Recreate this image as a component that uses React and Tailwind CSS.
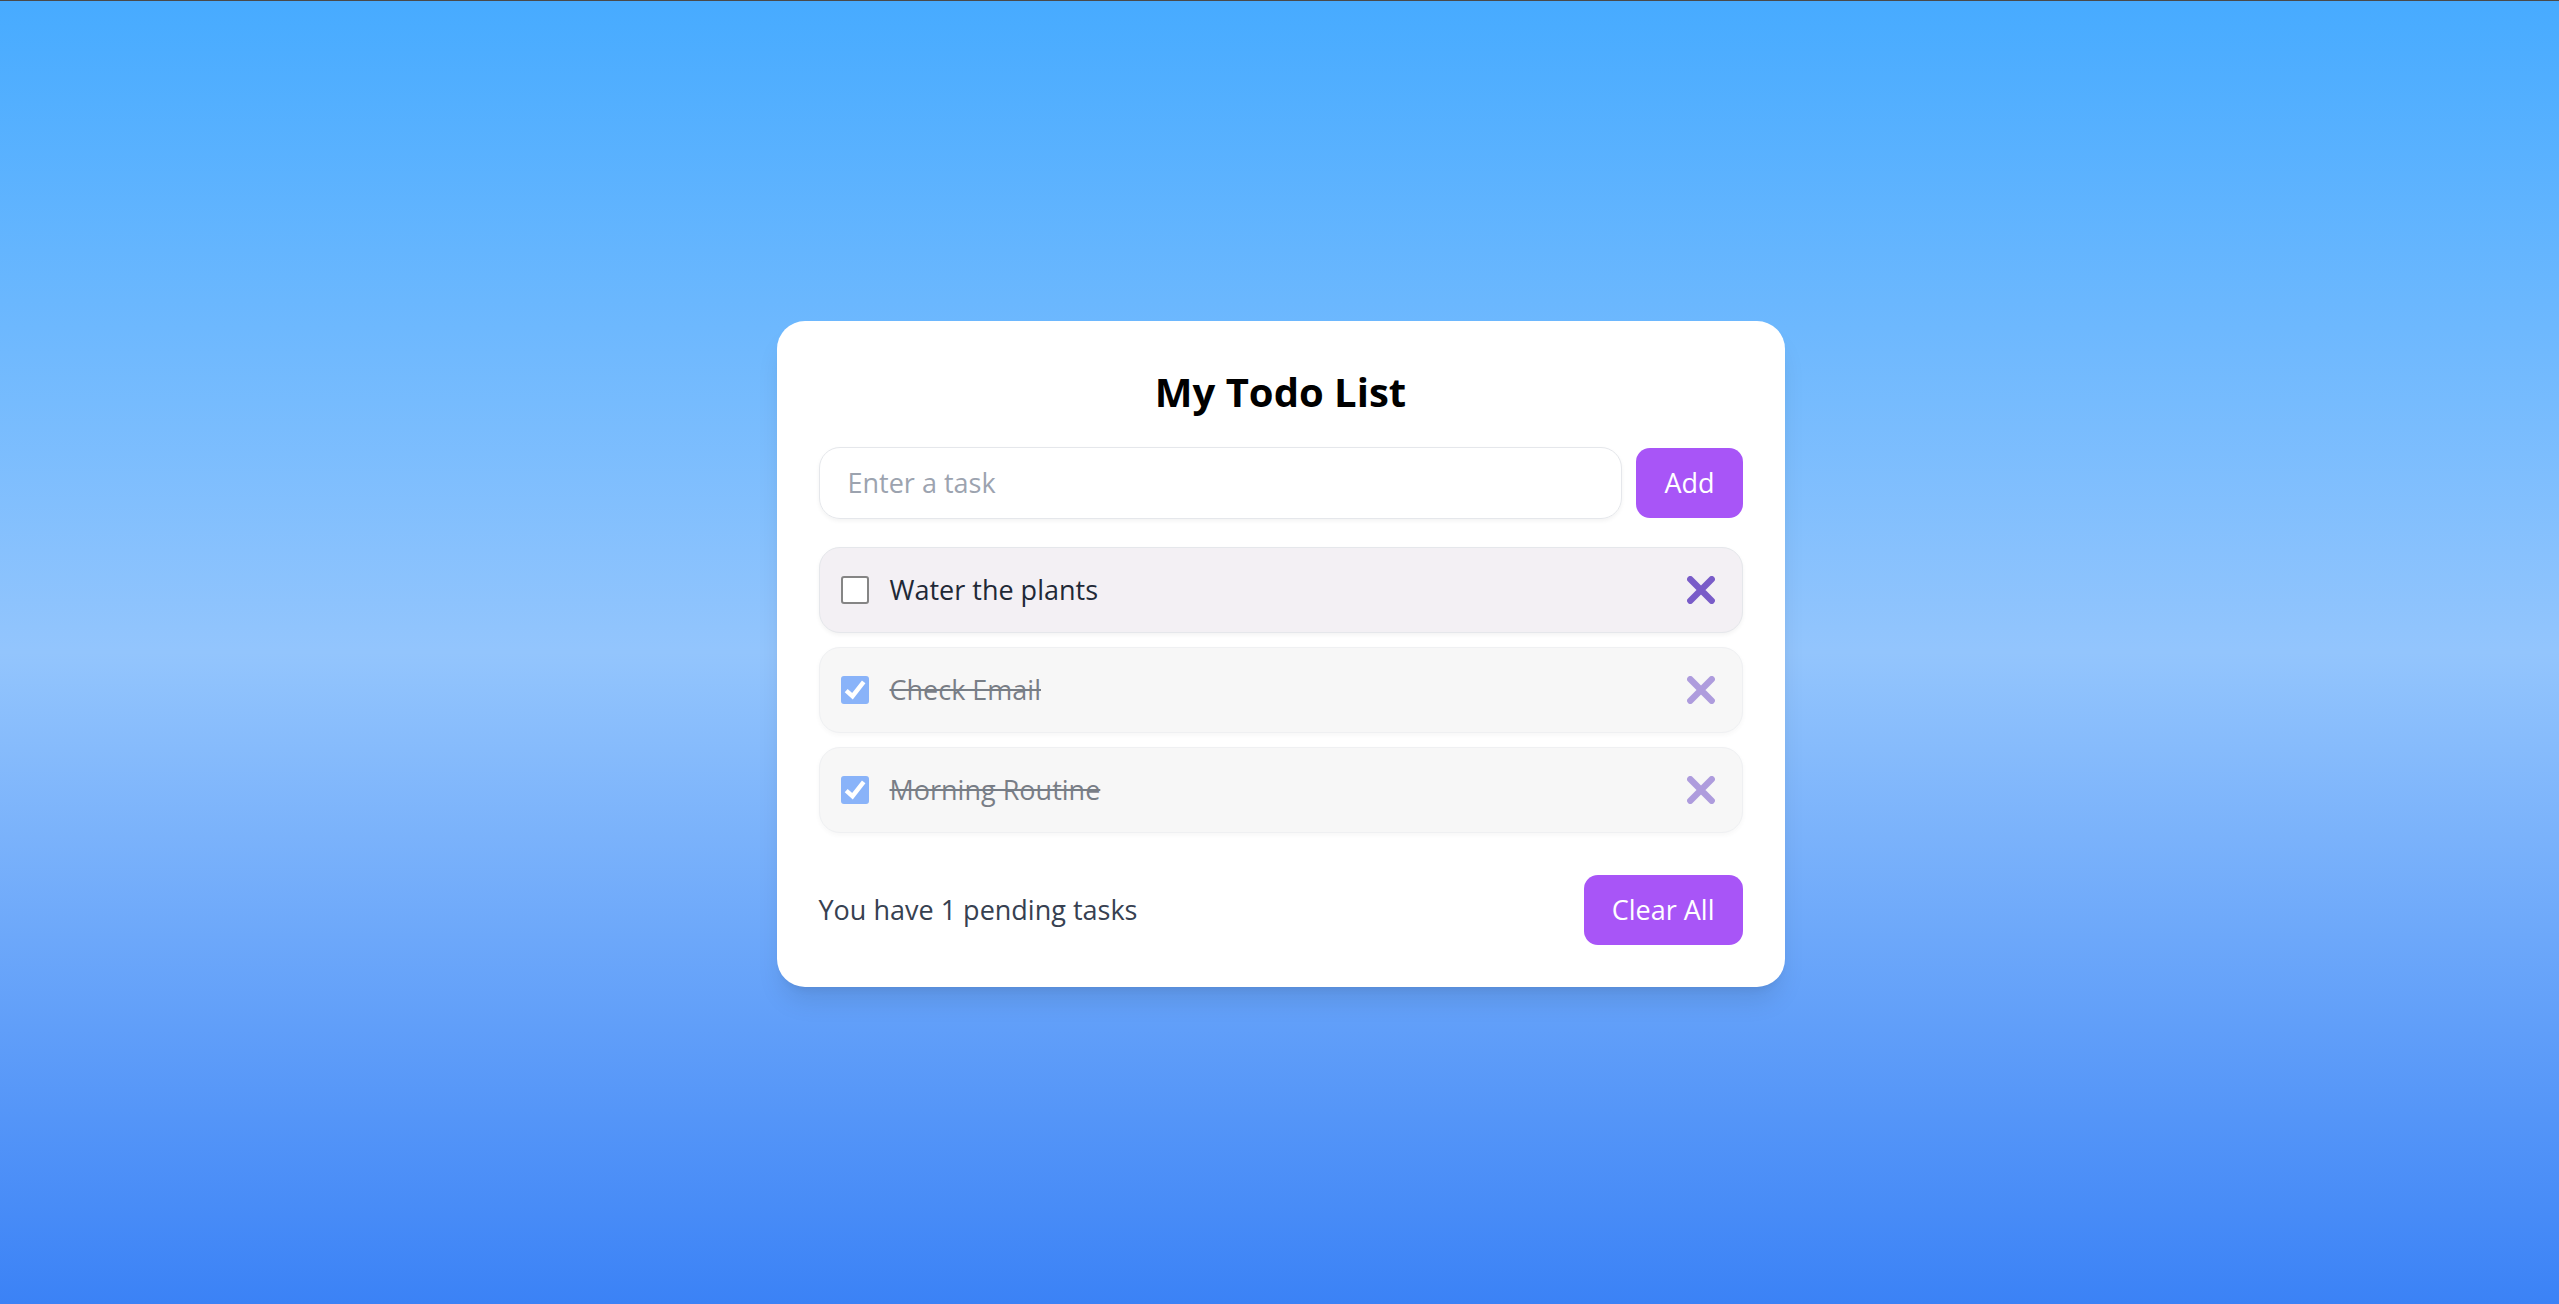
import { useState } from "react";

const initialTasks = [
  { id: 1, text: "Water the plants", done: false },
  { id: 2, text: "Check Email", done: true },
  { id: 3, text: "Morning Routine", done: true },
];

function CrossIcon() {
  return (
    <svg viewBox="0 0 28 28" className="size-7" fill="none" stroke="currentColor" strokeWidth="6.4" strokeLinecap="round" aria-hidden="true">
      <path d="M3.3 3.3 24.7 24.7M24.7 3.3 3.3 24.7" />
    </svg>
  );
}

function Checkbox({ checked, onChange }) {
  return (
    <span className="grid">
      <input
        type="checkbox"
        checked={checked}
        onChange={onChange}
        className="col-start-1 row-start-1 size-7 appearance-none rounded-[3px] border-2 border-[#858585] bg-white checked:border-[#3b82f6] checked:bg-[#3b82f6]"
      />
      {checked && (
        <svg viewBox="0 0 28 28" className="pointer-events-none col-start-1 row-start-1 size-7" fill="none" stroke="white" strokeWidth="4.4" aria-hidden="true">
          <path d="M5.2 14.6 11.5 20.2 22.7 5.8" />
        </svg>
      )}
    </span>
  );
}

function TaskItem({ task, onToggle, onRemove }) {
  const tone = task.done ? "bg-[#f2f2f2] opacity-60" : "bg-[#f3f0f4]";
  return (
    <li className={`flex items-center justify-between rounded-[21px] border border-[#e5e7eb] p-[21px] shadow-[0_2px_4px_rgba(0,0,0,0.05)] ${tone}`}>
      <label className="flex items-center gap-[21px]">
        <Checkbox checked={task.done} onChange={onToggle} />
        <span className={task.done ? "text-[#1f2937] line-through decoration-2" : "text-[#1f2937]"}>{task.text}</span>
      </label>
      <button type="button" aria-label={`Remove ${task.text}`} onClick={onRemove} className="px-[6px] text-[#795cc8]">
        <CrossIcon />
      </button>
    </li>
  );
}

export default function App() {
  const [tasks, setTasks] = useState(initialTasks);
  const [draft, setDraft] = useState("");
  const pending = tasks.filter((t) => !t.done).length;

  const addTask = (e) => {
    e.preventDefault();
    if (!draft.trim()) return;
    setTasks([{ id: Date.now(), text: draft.trim(), done: false }, ...tasks]);
    setDraft("");
  };
  const toggle = (id) => setTasks(tasks.map((t) => (t.id === id ? { ...t, done: !t.done } : t)));
  const remove = (id) => setTasks(tasks.filter((t) => t.id !== id));

  return (
    <main className="flex min-h-screen items-center justify-center border-t border-[#4a4a4a] bg-[linear-gradient(to_bottom,#47abff,#93c5fd_50%,#3b82f6)] pt-[2px] pl-[2px] font-['Open_Sans','Noto_Sans',sans-serif] text-[27px] leading-[42px]">
      <section className="w-full max-w-[1008px] rounded-[28px] bg-white p-[42px] shadow-[0_18px_26px_-5px_rgba(0,0,0,0.1),0_7px_10px_-7px_rgba(0,0,0,0.1)]">
        <h1 className="mb-[27px] pt-px text-center text-[40px] leading-[56px] font-bold text-black">My Todo List</h1>
        <form onSubmit={addTask} className="mb-7 flex items-center gap-[14px]">
          <input
            type="text"
            aria-label="Task"
            placeholder="Enter a task"
            value={draft}
            onChange={(e) => setDraft(e.target.value)}
            className="min-w-0 flex-1 rounded-[21px] border border-[#e5e7eb] px-7 py-[14px] shadow-[0_2px_4px_rgba(0,0,0,0.05)] placeholder:text-[#9ca3af]"
          />
          <button type="submit" className="rounded-[14px] bg-[#a855f7] px-7 py-[14px] text-white">Add</button>
        </form>
        <ul className="flex flex-col gap-[14px]">
          {tasks.map((t) => (
            <TaskItem key={t.id} task={t} onToggle={() => toggle(t.id)} onRemove={() => remove(t.id)} />
          ))}
        </ul>
        <div className="mt-[42px] flex items-center justify-between">
          <p className="text-[#374151]">You have {pending} pending tasks</p>
          <button type="button" onClick={() => setTasks([])} className="rounded-[14px] bg-[#a855f7] px-7 py-[14px] text-white">Clear All</button>
        </div>
      </section>
    </main>
  );
}
